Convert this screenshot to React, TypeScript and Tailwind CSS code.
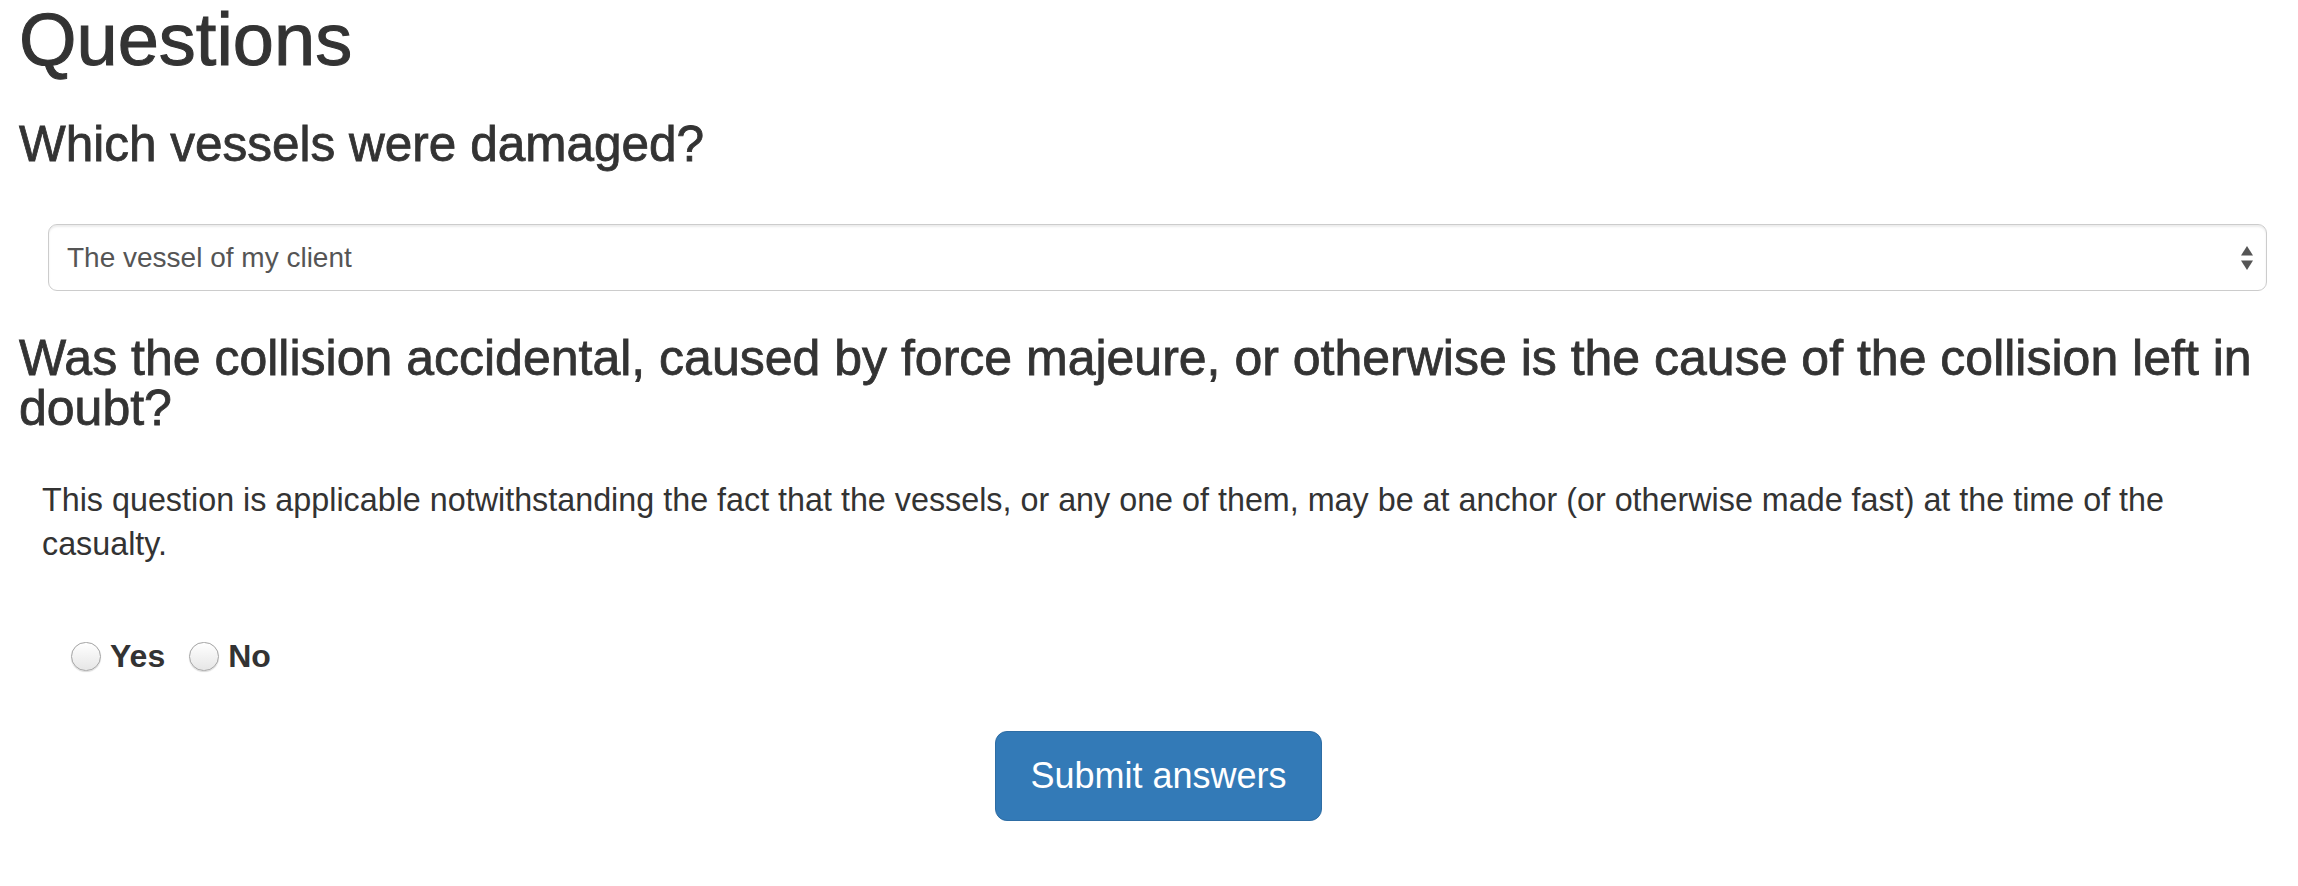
import React from 'react';

const SelectArrows = () => (
  <svg width="12" height="24" viewBox="0 0 12 24" className="shrink-0">
    <path d="M0 9.5 L6 0 L12 9.5 Z" fill="#555" />
    <path d="M0 14.5 L12 14.5 L6 24 Z" fill="#555" />
  </svg>
);

const Radio = ({ label }: { label: string }) => (
  <label className="flex items-center">
    <span className="w-[30px] h-[29px] rounded-full border border-[#a3a3a3] bg-gradient-to-b from-white to-[#e6e6e6] shadow-[0_1px_1px_rgba(0,0,0,0.15)] mr-[9px]" />
    <span className="font-bold text-[32px] leading-[34px] text-[#333]">{label}</span>
  </label>
);

export default function App() {
  return (
    <div className="min-h-screen bg-white pl-[19px] font-['Liberation_Sans',Arial,sans-serif] text-[#333]">
      {/* Title */}
      <h1 className="text-[74px] leading-[80px] font-normal [-webkit-text-stroke:1px_#333]">Questions</h1>

      {/* Question 1 */}
      <h3 className="mt-[39px] text-[49.5px] leading-[50px] font-normal [-webkit-text-stroke:0.8px_#333]">
        Which vessels were damaged?
      </h3>
      <div className="mt-[55px] ml-[29px] mr-[31px] h-[67px] flex items-center justify-between rounded-[9px] border border-[#cccccc] bg-white pl-[18px] pr-[13px] shadow-[inset_0_2px_2px_rgba(0,0,0,0.075)]">
        <span className="text-[28px] text-[#555]">The vessel of my client</span>
        <SelectArrows />
      </div>

      {/* Question 2 */}
      <h3 className="mt-[42px] pr-[12px] text-[50px] leading-[50px] font-normal [-webkit-text-stroke:0.8px_#333]">
        Was the collision accidental, caused by force majeure, or otherwise is the cause of the collision left in doubt?
      </h3>
      <p className="mt-[45px] ml-[23px] pr-[60px] text-[32.3px] leading-[44px]">
        This question is applicable notwithstanding the fact that the vessels, or any one of them, may be at anchor (or otherwise made fast) at the time of the casualty.
      </p>

      <div className="mt-[73px] ml-[52px] flex items-center gap-[24px]">
        <Radio label="Yes" />
        <Radio label="No" />
      </div>

      {/* Submit */}
      <div className="mt-[58px] flex justify-center">
        <button className="rounded-[12px] border border-[#2e6da4] bg-[#337ab7] px-[34px] py-[20px] text-[36px] leading-[48px] text-white">
          Submit answers
        </button>
      </div>
    </div>
  );
}
